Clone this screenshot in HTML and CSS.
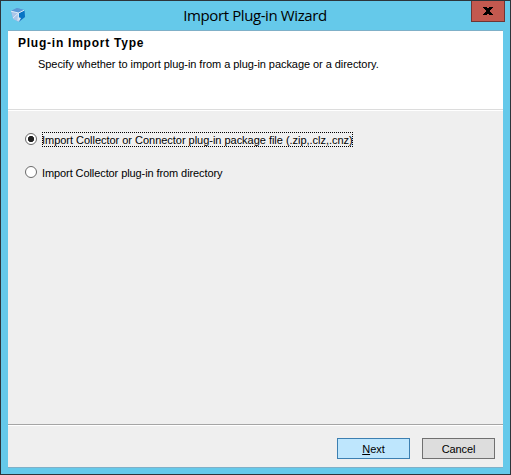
FILE: index.html
```html
<!DOCTYPE html>
<html lang="en">
<head>
<meta charset="utf-8">
<title>Import Plug-in Wizard</title>
<link rel="stylesheet" href="styles.css">
</head>
<body>
<div class="window">
  <div class="titlebar">
    <svg class="app-icon" viewBox="0 0 16 16" width="16" height="16">
      <path d="M1 4 7 1l7 2 1 7-6 5-6-4z" fill="#5f9bd5"/>
      <path d="M1 4 7 1l7 2-5 3z" fill="#5c98d6"/>
      <path d="M1 4 8.500 6 9 15l-6-3z" fill="#a9c4e8"/>
      <path d="M9 6 14.500 3.500 15 10l-6 4.500z" fill="#0874c4"/>
      <path d="M1 4.200 8.500 6 14 3.300M8.500 6 8 14M8.500 6 3 11" fill="none" stroke="#dcebf8" stroke-width="1"/>
      <path d="M8 10l3 1-2 3.500z" fill="#d5e5f5"/>
    </svg>
    <h1 class="title">Import Plug-in Wizard</h1>
    <button class="close" aria-label="Close">
      <svg viewBox="0 0 10 8" width="10" height="8" shape-rendering="crispEdges"><path d="M0 0h4v1h2V0h4v1H9v1H8v1H7v2h1v1h1v1h1v1H6V7H4v1H0V7h1V6h1V5h1V3H2V2H1V1H0z" fill="#000"/></svg>
    </button>
  </div>
  <div class="client">
    <header class="header">
      <h2 class="heading">Plug-in Import Type</h2>
      <p class="hint">Specify whether to import plug-in from a plug-in package or a directory.</p>
    </header>
    <main class="options">
      <label class="option selected"><span class="radio"></span><span class="label">Import Collector or Connector plug-in package file (.zip,.clz,.cnz)</span></label>
      <label class="option"><span class="radio"></span><span class="label">Import Collector plug-in from directory</span></label>
    </main>
    <footer class="footer">
      <button class="btn next"><u>N</u>ext</button>
      <button class="btn cancel">Cancel</button>
    </footer>
  </div>
</div>
</body>
</html>
```
FILE: styles.css
```css
* { box-sizing: border-box; }
body {
  margin: 0;
  font-family: "Liberation Sans", Arial, sans-serif;
  font-size: 11px;
  color: #000;
}
.window {
  width: 511px;
  height: 475px;
  padding: 0 6px 6px 7px;
  border: 1px solid #2d353b;
  background: #65c9ea;
  display: flex;
  flex-direction: column;
}
.titlebar {
  height: 29px;
  flex: none;
  display: flex;
  align-items: flex-start;
}
.app-icon { margin: 6px 0 0 2px; }
.title {
  flex: 1;
  margin: 3px 0 0 13px;
  text-align: center;
  font: 400 15px/22px "Open Sans", sans-serif;
  letter-spacing: -0.4px;
  white-space: nowrap;
}
.close {
  width: 34px;
  height: 21px;
  margin-right: -1px;
  padding: 0;
  display: flex;
  align-items: center;
  justify-content: center;
  background: #c3594f;
  border: 1px solid #6e3535;
  border-top: 0;
}
.client {
  flex: 1;
  display: flex;
  flex-direction: column;
  border: 1px solid #7fb0c8;
  border-width: 1px 0;
  margin-right: 1px;
  background: #efefef;
}
.header {
  height: 80px;
  flex: none;
  background: #fff;
  border-bottom: 1px solid #fff;
  box-shadow: inset 0 -1px #dcdcdc;
  padding: 4px 0 0 10px;
}
.heading {
  margin: 0;
  font-size: 12px;
  line-height: 16px;
  letter-spacing: 0.76px;
}
.hint {
  margin: 5px 0 0 20px;
  line-height: 16px;
  letter-spacing: -0.055px;
  white-space: nowrap;
}
.options {
  flex: 1;
  padding: 20px 0 0 17px;
  display: flex;
  flex-direction: column;
  gap: 17px;
}
.option { display: flex; align-items: center; height: 16px; }
.radio {
  width: 12px;
  height: 12px;
  border: 1px solid #6a6a6a;
  border-radius: 50%;
  background: #fff;
}
.selected .radio { background: radial-gradient(circle, #202020 2.800px, #fff 3.500px); }
.label {
  margin-left: 5px;
  height: 15px;
  line-height: 17px;
  letter-spacing: -0.09px;
  white-space: nowrap;
}
.selected .label {
  width: 311px;
  letter-spacing: -0.025px;
  outline: 1px dotted #000;
  outline-offset: -1px;
}
.footer {
  height: 43px;
  flex: none;
  border-top: 1px solid #a5a5a5;
  box-shadow: inset 0 1px #fff;
  padding: 13px 8px 0 0;
  display: flex;
  justify-content: flex-end;
  gap: 12px;
}
.btn {
  width: 73px;
  height: 21px;
  padding: 2px 0 0;
  border: 1px solid #707070;
  background: #dddddd;
  font: 11px/17px "Liberation Sans", Arial, sans-serif;
  color: #000;
}
.cancel { letter-spacing: -0.15px; }
.next { border-color: #3c7fb1; background: #bee6fd; }
```
